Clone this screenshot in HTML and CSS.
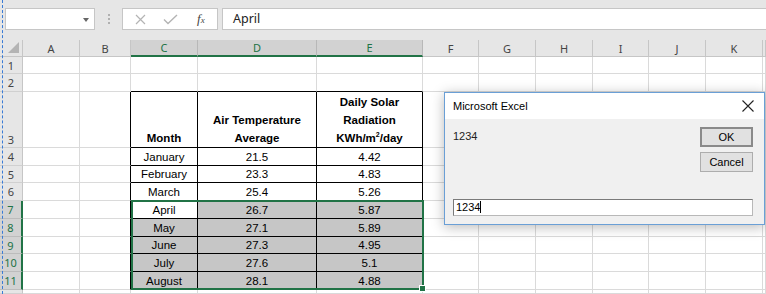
FILE: index.html
```html
<!DOCTYPE html>
<html>
<head>
<meta charset="utf-8">
<link rel="stylesheet" href="styles.css">
</head>
<body>
<div class="app">
  <div class="toolbar">
    <div class="namebox"><span class="arrow"></span></div>
    <div class="grip"><span></span><span></span><span></span></div>
    <div class="fbtns">
      <svg class="ic-x" width="11" height="11" viewBox="0 0 11 11"><path d="M1 1L10 10M10 1L1 10" stroke="#b4b4b4" stroke-width="1.2" fill="none"/></svg>
      <svg class="ic-ok" width="15" height="11" viewBox="0 0 15 11"><path d="M1 5.5L5 9.5L14 1" stroke="#b4b4b4" stroke-width="1.4" fill="none"/></svg>
      <span class="fx">f<span class="fxs">x</span></span>
    </div>
    <div class="formula">April</div>
  </div>

  <div class="sheet">
    <div class="corner"></div>
    <div class="ch">A</div><div class="ch">B</div><div class="ch on">C</div><div class="ch on">D</div><div class="ch on">E</div><div class="ch">F</div><div class="ch">G</div><div class="ch">H</div><div class="ch">I</div><div class="ch">J</div><div class="ch">K</div><div class="ch"></div>

    <div class="rh">1</div>
    <div class="c"></div><div class="c"></div><div class="c"></div><div class="c"></div><div class="c"></div><div class="c"></div><div class="c"></div><div class="c"></div><div class="c"></div><div class="c"></div><div class="c"></div><div class="c"></div>

    <div class="rh">2</div>
    <div class="c"></div><div class="c"></div><div class="c tb"></div><div class="c tb"></div><div class="c tb"></div><div class="c"></div><div class="c"></div><div class="c"></div><div class="c"></div><div class="c"></div><div class="c"></div><div class="c"></div>

    <div class="rh bot">3</div>
    <div class="c"></div><div class="c lb"></div>
    <div class="c t hd"><div>Month</div></div>
    <div class="c t hd"><div>Air Temperature<br>Average</div></div>
    <div class="c t hd"><div>Daily Solar<br>Radiation<br>KWh/m<sup>2</sup>/day</div></div>
    <div class="c"></div><div class="c"></div><div class="c"></div><div class="c"></div><div class="c"></div><div class="c"></div><div class="c"></div>

    <div class="rh">4</div>
    <div class="c"></div><div class="c lb"></div>
    <div class="c t">January</div><div class="c t">21.5</div><div class="c t">4.42</div>
    <div class="c"></div><div class="c"></div><div class="c"></div><div class="c"></div><div class="c"></div><div class="c"></div><div class="c"></div>

    <div class="rh">5</div>
    <div class="c"></div><div class="c lb"></div>
    <div class="c t">February</div><div class="c t">23.3</div><div class="c t">4.83</div>
    <div class="c"></div><div class="c"></div><div class="c"></div><div class="c"></div><div class="c"></div><div class="c"></div><div class="c"></div>

    <div class="rh">6</div>
    <div class="c"></div><div class="c lb"></div>
    <div class="c t">March</div><div class="c t">25.4</div><div class="c t">5.26</div>
    <div class="c"></div><div class="c"></div><div class="c"></div><div class="c"></div><div class="c"></div><div class="c"></div><div class="c"></div>

    <div class="rh on">7</div>
    <div class="c"></div><div class="c lb"></div>
    <div class="c t">April</div><div class="c t s">26.7</div><div class="c t s">5.87</div>
    <div class="c"></div><div class="c"></div><div class="c"></div><div class="c"></div><div class="c"></div><div class="c"></div><div class="c"></div>

    <div class="rh on">8</div>
    <div class="c"></div><div class="c lb"></div>
    <div class="c t s">May</div><div class="c t s">27.1</div><div class="c t s">5.89</div>
    <div class="c"></div><div class="c"></div><div class="c"></div><div class="c"></div><div class="c"></div><div class="c"></div><div class="c"></div>

    <div class="rh on">9</div>
    <div class="c"></div><div class="c lb"></div>
    <div class="c t s">June</div><div class="c t s">27.3</div><div class="c t s">4.95</div>
    <div class="c"></div><div class="c"></div><div class="c"></div><div class="c"></div><div class="c"></div><div class="c"></div><div class="c"></div>

    <div class="rh on">10</div>
    <div class="c"></div><div class="c lb"></div>
    <div class="c t s">July</div><div class="c t s">27.6</div><div class="c t s">5.1</div>
    <div class="c"></div><div class="c"></div><div class="c"></div><div class="c"></div><div class="c"></div><div class="c"></div><div class="c"></div>

    <div class="rh on">11</div>
    <div class="c"></div><div class="c lb"></div>
    <div class="c t s">August</div><div class="c t s">28.1</div><div class="c t s">4.88</div>
    <div class="c"></div><div class="c"></div><div class="c"></div><div class="c"></div><div class="c"></div><div class="c"></div><div class="c"></div>

    <div class="rh"></div>
    <div class="c"></div><div class="c"></div><div class="c"></div><div class="c"></div><div class="c"></div><div class="c"></div><div class="c"></div><div class="c"></div><div class="c"></div><div class="c"></div><div class="c"></div><div class="c"></div>

    <div class="sel"></div>
  </div>

  <div class="dialog">
    <div class="dtitle">
      <span>Microsoft Excel</span>
      <svg width="12" height="12" viewBox="0 0 12 12"><path d="M0.5 0.5L11.5 11.5M11.5 0.5L0.5 11.5" stroke="#222" stroke-width="1.1" fill="none"/></svg>
    </div>
    <div class="dbody">
      <div class="dtop">
        <div class="msg">1234</div>
        <div class="btns">
          <div class="btn def">OK</div>
          <div class="btn">Cancel</div>
        </div>
      </div>
      <div class="dinput"><span class="caret">1234</span></div>
    </div>
  </div>

  <div class="pagebreak"></div>
</div>
</body>
</html>
```

FILE: styles.css
```css
html, body {
  margin: 0;
  padding: 0;
  background: #ffffff;
  overflow: hidden;
}
.app {
  position: relative;
  width: 766px;
  height: 294px;
  overflow: hidden;
  font-family: "Liberation Sans", Arial, sans-serif;
}
.toolbar {
  height: 40px;
  background: #e6e6e6;
  display: flex;
  align-items: flex-start;
  padding-top: 8px;
  box-sizing: border-box;
}
.namebox {
  margin-left: 5px;
  width: 90px;
  height: 22px;
  box-sizing: border-box;
  background: #fff;
  border: 1px solid #c6c6c6;
  position: relative;
}
.arrow {
  position: absolute;
  right: 5px;
  top: 9px;
  width: 0;
  height: 0;
  border-left: 3.5px solid transparent;
  border-right: 3.5px solid transparent;
  border-top: 4px solid #666;
}
.grip {
  width: 27px;
  height: 22px;
  display: flex;
  flex-direction: column;
  align-items: center;
  justify-content: center;
  gap: 2px;
}
.grip span {
  width: 2px;
  height: 2px;
  background: #b0b0b0;
}
.fbtns {
  width: 96px;
  height: 22px;
  box-sizing: border-box;
  background: #fff;
  border: 1px solid #c6c6c6;
  display: flex;
  align-items: center;
}
.ic-x { margin-left: 12px; }
.ic-ok { margin-left: 17px; }
.fx {
  margin-left: 19px;
  font-family: "Liberation Serif", serif;
  font-style: italic;
  font-size: 13px;
  color: #444;
}
.fxs { font-size: 9px; }
.formula {
  margin-left: 4px;
  flex: 1;
  height: 22px;
  box-sizing: border-box;
  background: #fff;
  border: 1px solid #c6c6c6;
  border-right: none;
  font-family: "Noto Sans", sans-serif;
  font-size: 12.5px;
  line-height: 20px;
  padding-left: 10px;
  color: #222;
}

.sheet {
  position: relative;
  display: grid;
  grid-template-columns: 23px 57px 51px 67px 119px 106px 56px 57px 57px 56px 57px 57px 1fr;
  grid-template-rows: 17px 17px 18px 56px 18px 17px 18px 18px 18px 17px 18px 18px 1fr;
  height: 254px;
  font-size: 11.5px;
  color: #000;
}
.sheet > div { box-sizing: border-box; }
.corner {
  background: #e6e6e6;
  border-right: 1px solid #c6c6c6;
  border-bottom: 1px solid #c6c6c6;
  position: relative;
}
.corner::after {
  content: "";
  position: absolute;
  right: 3px;
  bottom: 3px;
  width: 0;
  height: 0;
  border-left: 11px solid transparent;
  border-bottom: 11px solid #b4b4b4;
}
.ch {
  background: #e6e6e6;
  border-right: 1px solid #c6c6c6;
  border-bottom: 1px solid #c6c6c6;
  display: flex;
  align-items: center;
  justify-content: center;
  font-family: "Noto Sans", sans-serif;
  font-size: 11px;
  color: #444;
}
.ch.on {
  background: #d2d2d2;
  color: #217346;
  border-bottom: 2px solid #217346;
  border-right-color: #b8b8b8;
}
.rh {
  background: #e6e6e6;
  border-right: 1px solid #c6c6c6;
  border-bottom: 1px solid #d0d0d0;
  display: flex;
  align-items: center;
  justify-content: center;
  font-family: "Noto Sans", sans-serif;
  font-size: 11px;
  color: #444;
}
.rh.bot { align-items: flex-end; }
.rh.on {
  background: #d2d2d2;
  color: #217346;
  border-right: 2px solid #217346;
  border-bottom-color: #bcbcbc;
}
.c {
  border-right: 1px solid #dadada;
  border-bottom: 1px solid #dadada;
  display: flex;
  align-items: center;
  justify-content: center;
  white-space: nowrap;
}
.c.tb { border-bottom-color: #000; }
.c.lb { border-right-color: #000; }
.c.t {
  border-right-color: #000;
  border-bottom-color: #000;
}
.c.s { background: #c6c6c6; }
.c.hd {
  align-items: flex-end;
  text-align: center;
  font-weight: bold;
  line-height: 18px;
}
.c.hd sup {
  font-size: 7px;
  line-height: 0;
  vertical-align: 5px;
}
.sel {
  position: absolute;
  grid-column: 4 / 7;
  grid-row: 8 / 13;
  top: -1px;
  left: 0;
  right: -1px;
  bottom: 0;
  border: 2px solid #217346;
}
.sel::after {
  content: "";
  position: absolute;
  right: -4px;
  bottom: -4px;
  width: 5px;
  height: 5px;
  background: #217346;
  border: 1px solid #fff;
}

.dialog {
  position: absolute;
  left: 444px;
  top: 92px;
  width: 321px;
  height: 133px;
  box-sizing: border-box;
  border: 1px solid #6a9fd6;
  background: #f0f0f0;
  box-shadow: 0 2px 12px rgba(0, 0, 0, 0.28);
  font-family: "Liberation Sans", Arial, sans-serif;
  font-size: 11px;
  color: #000;
}
.dtitle {
  height: 26px;
  background: #fff;
  display: flex;
  align-items: center;
  justify-content: space-between;
  padding: 0 10px 0 8px;
  font-size: 11px;
}
.dbody {
  padding: 8px 11px 0 8px;
}
.dtop {
  display: flex;
  justify-content: space-between;
  align-items: flex-start;
}
.msg {
  margin-top: 3px;
  color: #222;
}
.btns {
  display: flex;
  flex-direction: column;
  gap: 5px;
}
.btn {
  width: 53px;
  height: 20px;
  box-sizing: border-box;
  background: #e1e1e1;
  border: 1px solid #adadad;
  display: flex;
  align-items: center;
  justify-content: center;
  font-size: 11px;
}
.btn.def {
  border: 2px solid #8a8a8a;
}
.dinput {
  margin-top: 27px;
  height: 17px;
  width: 300px;
  box-sizing: border-box;
  background: #fff;
  border: 1px solid #b8b8b8;
  border-top-color: #7a7a7a;
  border-left-color: #7a7a7a;
  font-size: 11px;
  line-height: 15px;
  padding-left: 2px;
}
.caret {
  border-right: 1px solid #000;
  padding-right: 0;
}

.pagebreak {
  position: absolute;
  left: 2px;
  top: 0;
  height: 294px;
  border-left: 1px dashed #3a7bd5;
}
```
